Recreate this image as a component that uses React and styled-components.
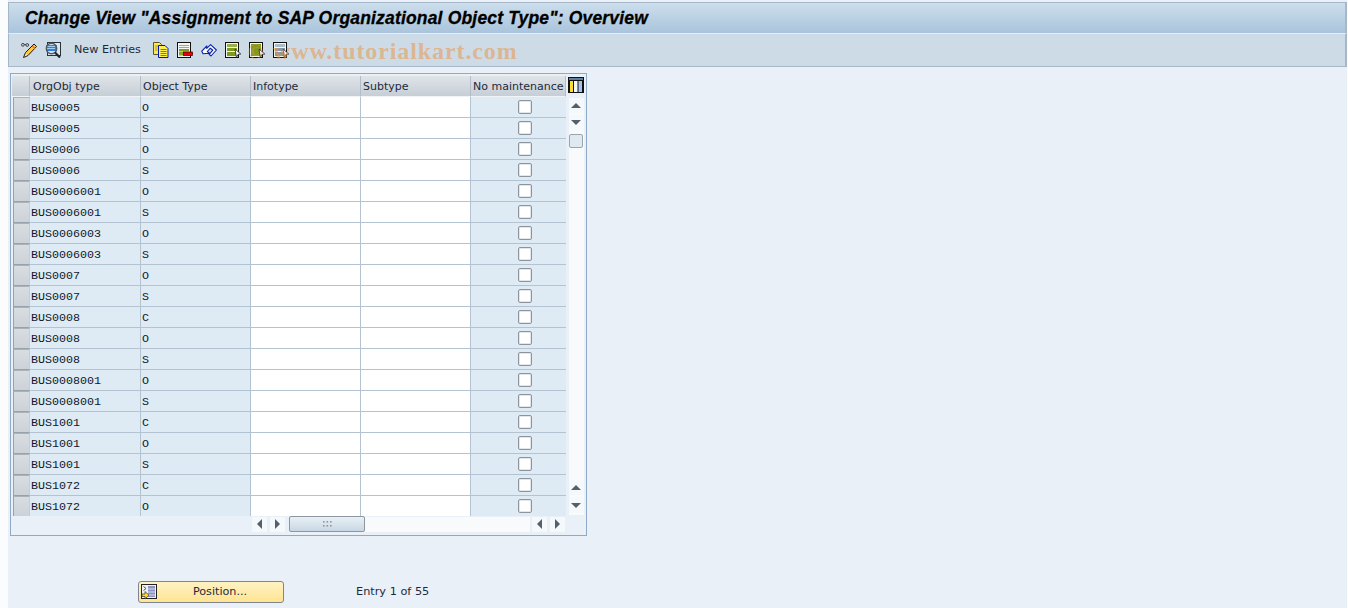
import React from 'react';
import styled, { createGlobalStyle } from 'styled-components';

const GlobalStyle = createGlobalStyle`
  html, body { margin: 0; padding: 0; background: #fbfcfd; }
  body { font-family: "DejaVu Sans", Tahoma, sans-serif; overflow: hidden; }
`;

const uiFont = '"DejaVu Sans", Tahoma, sans-serif';

const Screen = styled.div`
  box-sizing: border-box;
  width: 1339px;
  height: 608px;
  margin-left: 8px;
  padding-top: 2px;
  background: #e9f0f7;
  display: flex;
  flex-direction: column;
`;

const TitleBar = styled.div`
  box-sizing: border-box;
  height: 31px;
  display: flex;
  align-items: center;
  padding-left: 16px;
  background: linear-gradient(#cddeec, #a9c4dc);
  border: 1px solid #a5b7c8;
  border-bottom: 0;
  border-right-width: 2px;
`;

const Title = styled.h1`
  margin: 0;
  font: italic bold 17.5px "Liberation Sans", Arial, sans-serif;
  letter-spacing: 0.18px;
  color: #000;
  -webkit-text-stroke: 0.3px #000;
  white-space: nowrap;
`;

const Toolbar = styled.div`
  position: relative;
  box-sizing: border-box;
  height: 34px;
  display: flex;
  align-items: center;
  padding: 0 0 1px 12px;
  background: #cddbe6;
  border: 1px solid #a5b7c8;
  border-top: 1px solid #e4edf4;
  border-right-width: 2px;
`;

const ToolIcon = styled.svg`
  width: 16px;
  height: 16px;
  flex: none;
  margin-right: 8px;
`;

const ToolText = styled.span`
  font: 11.2px ${uiFont};
  color: #1c2a3c;
  margin: 0 12px 0 5px;
  white-space: nowrap;
`;

const Watermark = styled.div`
  position: absolute;
  left: 239px;
  top: 4px;
  display: flex;
  align-items: baseline;
  font: bold 24px "Liberation Serif", serif;
  letter-spacing: 0.9px;
  color: rgba(232, 150, 70, 0.55);
  white-space: nowrap;
  pointer-events: none;
`;

const WatermarkSign = styled.span`
  font-size: 20px;
  font-weight: normal;
  letter-spacing: 0;
  width: 25px;
`;

const Panel = styled.div`
  box-sizing: border-box;
  width: 577px;
  height: 463px;
  margin: 6px 0 0 2px;
  padding: 2px 0 0 1px;
  border: 1px solid #8eaac6;
  display: flex;
`;

const TableArea = styled.div`
  width: 554px;
  flex: none;
  display: flex;
  flex-direction: column;
`;

const columns = '18px 111px 110px 110px 110px 95px';

const HeaderRow = styled.div`
  display: grid;
  grid-template-columns: ${columns};
  grid-template-rows: 21px;
  height: 21px;
`;

const HeaderCell = styled.div`
  box-sizing: border-box;
  height: 21px;
  padding-left: ${(props) => props.$pad || 2}px;
  background: linear-gradient(#dfe4e8, #c6ced6);
  border-right: 1px solid #b3bdc7;
  border-bottom: 1px solid #f0f4f7;
  font: 11px/22px ${uiFont};
  color: #1c2a3c;
  white-space: nowrap;
`;

const Rows = styled.div`
  height: 419px;
  overflow: hidden;
`;

const Row = styled.div`
  display: grid;
  grid-template-columns: ${columns};
  grid-template-rows: 21px;
  height: 21px;
`;

const RowHead = styled.div`
  box-sizing: border-box;
  margin-left: 1px;
  height: 21px;
  background: linear-gradient(#d8dde2, #ccd2d8);
  border: 1px solid;
  border-color: #aab3bc #c6ccd2 #98a2ac #98a2ac;
`;

const Cell = styled.div`
  box-sizing: border-box;
  height: 21px;
  background: ${(props) => (props.$input ? '#fff' : '#deeaf4')};
  border-right: 1px solid #b4c3d2;
  border-bottom: 1px solid #b4c3d2;
  padding-left: 1px;
  font: 11.67px/23px "Liberation Mono", "Courier New", monospace;
  color: #10182a;
  white-space: nowrap;
`;

const CheckCell = styled(Cell)`
  display: flex;
  align-items: center;
  justify-content: center;
  padding: 0 1px 0 14px;
  border-right: 0;
`;

const CheckBox = styled.span`
  box-sizing: border-box;
  width: 14px;
  height: 14px;
  background: #fff;
  border: 1px solid #8d949b;
  border-radius: 2px;
  box-shadow: inset 0 0 0 1px #e4e7ea;
`;

const HBar = styled.div`
  height: 18px;
  display: flex;
  align-items: center;
  padding-left: 240px;
  padding-bottom: 2px;
  box-sizing: border-box;
`;

const ScrollButton = styled.button`
  width: 15px;
  height: 15px;
  flex: none;
  margin: ${(props) => props.$margin || 0};
  padding: 0;
  border: 0;
  border-radius: 1px;
  background: #f6f9fb;
  display: flex;
  align-items: center;
  justify-content: center;
`;

const Arrow = styled.span`
  width: 0;
  height: 0;
  border-style: solid;
  border-color: transparent;
  ${(props) => props.$dir === 'up' && 'border-width: 0 5px 5px; border-bottom-color: #52606e;'}
  ${(props) => props.$dir === 'down' && 'border-width: 5px 5px 0; border-top-color: #52606e;'}
  ${(props) => props.$dir === 'left' && 'border-width: 5px 5px 5px 0; border-right-color: #52606e;'}
  ${(props) => props.$dir === 'right' && 'border-width: 5px 0 5px 5px; border-left-color: #52606e;'}
`;

const HThumb = styled.div`
  box-sizing: border-box;
  width: 76px;
  height: 16px;
  margin-left: 4px;
  background: linear-gradient(#e9f0f6, #c9d7e3);
  border: 1px solid #8e979f;
  border-radius: 2px;
  display: flex;
  align-items: center;
  justify-content: center;
`;

const HTrack = styled.div`
  width: 165px;
  height: 15px;
  flex: none;
  background: #f8fafc;
`;

const VBar = styled.div`
  width: 20px;
  flex: none;
  display: flex;
  flex-direction: column;
  align-items: center;
`;

const ConfigIcon = styled.svg`
  width: 16px;
  height: 16px;
  flex: none;
  margin: 1px 0 5px;
`;

const VTrack = styled.div`
  width: 15px;
  height: 417px;
  display: flex;
  flex-direction: column;
  background: #f8fafc;
`;

const VThumb = styled.div`
  box-sizing: border-box;
  width: 14px;
  height: 14px;
  margin: 4px 0 0 0;
  background: #e1e9f0;
  border: 1px solid #9aa4ad;
  border-radius: 2px;
`;

const VSpacer = styled.div`
  flex: 1;
`;

const Footer = styled.div`
  display: flex;
  align-items: center;
  margin: 45px 0 0 130px;
`;

const PositionButton = styled.button`
  box-sizing: border-box;
  width: 146px;
  height: 22px;
  padding: 0 0 2px 18px;
  position: relative;
  background: linear-gradient(#fff3c4, #ffe491);
  border: 1px solid #7f858a;
  border-radius: 3px;
  font: 11.2px ${uiFont};
  color: #1c2a3c;
`;

const ButtonIcon = styled.svg`
  position: absolute;
  left: 2px;
  top: 2px;
  width: 16px;
  height: 16px;
`;

const EntryText = styled.span`
  margin: 0 0 2px 72px;
  font: 11.3px ${uiFont};
  color: #1c2a3c;
`;

const Pencil = () => (
  <ToolIcon viewBox="0 0 16 16">
    <path d="M0.5 2.8 a1.4 1.4 0 1 1 2.8 0 a1.4 1.4 0 1 1 -2.8 0 M3.3 2.5 h1.5 M4.8 3 a1.4 1.4 0 1 1 2.8 0 a1.4 1.4 0 1 1 -2.8 0" fill="none" stroke="#333" strokeWidth="0.9" />
    <path d="M13 2 L15.5 4.5 L7 13.5 L2.5 15.5 L4.5 10.5 Z" fill="#ffc933" stroke="#1a1a1a" strokeWidth="1" />
    <path d="M11.4 4 L13.9 6.5" stroke="#e8772a" strokeWidth="1.6" />
    <path d="M3.5 14.5 L5 11.5 L6.5 13 Z" fill="#f7e7c4" />
  </ToolIcon>
);

const Display = () => (
  <ToolIcon viewBox="0 0 16 16">
    <rect x="2.5" y="0.5" width="13" height="13" fill="#dfe5ea" stroke="#2a333c" />
    <rect x="1" y="3" width="11" height="6" fill="#2f80e0" />
    <path d="M2 4.5 h8 M2 6.5 h8" stroke="#a5cdf5" strokeWidth="1" />
    <circle cx="6.5" cy="6.5" r="5.2" fill="none" stroke="#4d5a66" strokeWidth="1.4" />
    <path d="M10 10.5 L15 15.5" stroke="#1e262e" strokeWidth="2.2" />
  </ToolIcon>
);

const Copy = () => (
  <ToolIcon viewBox="0 0 16 16">
    <path d="M0.5 0.5 h6 l2 2 v10 h-8 Z" fill="#ffe45e" stroke="#5a5a20" />
    <path d="M5.5 3.5 h6.5 l3 3 v9 h-9.5 Z" fill="#fff04d" stroke="#0018b0" />
    <path d="M7.5 7.5 h6 M7.5 9.5 h6 M7.5 11.5 h6 M7.5 13.5 h6" stroke="#8a7c10" />
    <path d="M2 4 h3 M2 6 h2.5 M2 8 h2.5" stroke="#a89a20" />
  </ToolIcon>
);

const Delete = () => (
  <ToolIcon viewBox="0 0 16 16">
    <rect x="0.5" y="0.5" width="13" height="15" fill="#f4f6f2" stroke="#111" />
    <path d="M2 3.5 h10 M2 5.5 h10" stroke="#9aa4a8" />
    <rect x="2" y="7" width="10" height="2.5" fill="#7f9a1e" />
    <rect x="2" y="10" width="5" height="3.5" fill="#8aa52c" />
    <rect x="6.5" y="10" width="9" height="3.5" fill="#e8000c" stroke="#300" strokeWidth="0.7" />
  </ToolIcon>
);

const Undo = () => (
  <ToolIcon viewBox="0 0 16 16">
    <path d="M0.8 9.2 L5.8 4 L5.8 6.4 L9.6 2.6 L15.4 8 L10 14 L8.2 12.4 L11.8 8.2 L9.3 6.2 L6.3 9.5 L8.4 11.2 L2 11.8 Z" fill="#fff" stroke="#0a1fa8" strokeWidth="1.1" strokeLinejoin="round" />
  </ToolIcon>
);

const Select = ({ tone }) => {
  const rows = tone === 'blue' ? '#7d97ad' : '#7f9a1e';
  const top = tone === 'blue' ? '#a9bac8' : '#98ad4c';
  return (
    <ToolIcon viewBox="0 0 16 16">
      <rect x="0.5" y="0.5" width="13" height="15" fill="#f4f6f2" stroke="#111" />
      <rect x="2" y="2" width="10" height="3" fill={top} />
      <rect x="2" y="6" width="10" height="3" fill={rows} />
      <rect x="2" y="10" width="10" height="4" fill={rows} />
      {tone === 'all' && <rect x="2" y="2" width="10" height="12" fill="#7f9a1e" />}
      <path d="M10 7 L15.8 12 L13 12.4 L11.5 15.6 Z" fill="#fff" stroke="#222" strokeWidth="0.8" />
    </ToolIcon>
  );
};

const Config = () => (
  <ConfigIcon viewBox="0 0 16 16">
    <rect x="0" y="0" width="16" height="16" fill="#111" />
    <rect x="1" y="1" width="14" height="2" fill="#5b7f9c" />
    <rect x="2" y="4" width="3" height="11" fill="#ffdc2e" />
    <rect x="6" y="4" width="3.5" height="11" fill="#f7f7f7" />
    <rect x="10.5" y="4" width="3.5" height="11" fill="#a3c4ec" />
  </ConfigIcon>
);

const PositionIcon = () => (
  <ButtonIcon viewBox="0 0 16 16">
    <rect x="0.5" y="0.5" width="15" height="14" fill="#eef1f4" stroke="#222" />
    <rect x="7" y="2" width="7" height="11" fill="#8d93c4" />
    <path d="M7 5 h7 M7 8 h7 M7 11 h7" stroke="#d9dcee" />
    <path d="M2.5 2.5 L5 4.5 L2.5 6.5" fill="none" stroke="#555" />
    <path d="M1 10 h3 v-2.5 l4 3.7 l-4 3.7 v-2.4 h-3 Z" fill="#ffd820" stroke="#333" strokeWidth="0.7" />
  </ButtonIcon>
);

const GripDots = () => (
  <svg width="9" height="6" viewBox="0 0 9 6">
    {[0, 4].map((y) =>
      [0, 3.5, 7].map((x) => <rect key={`${x}-${y}`} x={x} y={y} width="1.6" height="1.6" fill="#8e979f" />)
    )}
  </svg>
);

const rowData = [
  ['BUS0005', 'O'], ['BUS0005', 'S'], ['BUS0006', 'O'], ['BUS0006', 'S'],
  ['BUS0006001', 'O'], ['BUS0006001', 'S'], ['BUS0006003', 'O'], ['BUS0006003', 'S'],
  ['BUS0007', 'O'], ['BUS0007', 'S'], ['BUS0008', 'C'], ['BUS0008', 'O'],
  ['BUS0008', 'S'], ['BUS0008001', 'O'], ['BUS0008001', 'S'], ['BUS1001', 'C'],
  ['BUS1001', 'O'], ['BUS1001', 'S'], ['BUS1072', 'C'], ['BUS1072', 'O'],
];

const headers = ['OrgObj type', 'Object Type', 'Infotype', 'Subtype', 'No maintenance'];

export default function App() {
  return (
    <Screen>
      <GlobalStyle />
      <TitleBar>
        <Title>Change View "Assignment to SAP Organizational Object Type": Overview</Title>
      </TitleBar>
      <Toolbar>
        <Pencil />
        <Display />
        <ToolText>New Entries</ToolText>
        <Copy />
        <Delete />
        <Undo />
        <Select tone="some" />
        <Select tone="all" />
        <Select tone="blue" />
        <Watermark><WatermarkSign>©</WatermarkSign>www.tutorialkart.com</Watermark>
      </Toolbar>
      <Panel>
        <TableArea>
          <HeaderRow>
            <HeaderCell />
            {headers.map((h, i) => (
              <HeaderCell key={h} $pad={i === 0 ? 3 : 2}>{h}</HeaderCell>
            ))}
          </HeaderRow>
          <Rows>
            {rowData.map(([org, type], i) => (
              <Row key={i}>
                <RowHead />
                <Cell>{org}</Cell>
                <Cell>{type}</Cell>
                <Cell $input />
                <Cell $input />
                <CheckCell><CheckBox /></CheckCell>
              </Row>
            ))}
          </Rows>
          <HBar>
            <ScrollButton><Arrow $dir="left" /></ScrollButton>
            <ScrollButton $margin="0 0 0 3px"><Arrow $dir="right" /></ScrollButton>
            <HThumb><GripDots /></HThumb>
            <HTrack />
            <ScrollButton $margin="0 0 0 2px"><Arrow $dir="left" /></ScrollButton>
            <ScrollButton $margin="0 0 0 3px"><Arrow $dir="right" /></ScrollButton>
          </HBar>
        </TableArea>
        <VBar>
          <Config />
          <VTrack>
            <ScrollButton><Arrow $dir="up" /></ScrollButton>
            <ScrollButton $margin="2px 0 0"><Arrow $dir="down" /></ScrollButton>
            <VThumb />
            <VSpacer />
            <ScrollButton><Arrow $dir="up" /></ScrollButton>
            <ScrollButton $margin="3px 0 2px"><Arrow $dir="down" /></ScrollButton>
          </VTrack>
        </VBar>
      </Panel>
      <Footer>
        <PositionButton>
          <PositionIcon />
          Position...
        </PositionButton>
        <EntryText>Entry 1 of 55</EntryText>
      </Footer>
    </Screen>
  );
}
